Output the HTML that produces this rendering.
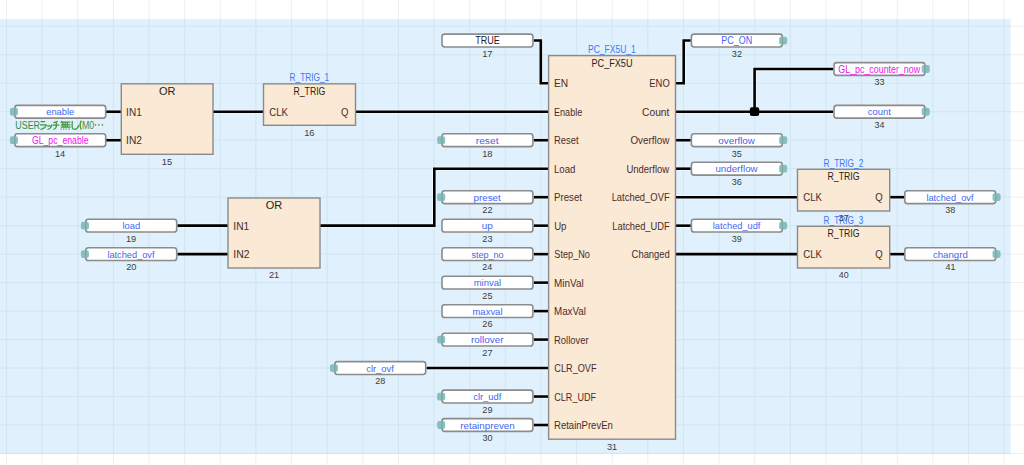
<!DOCTYPE html>
<html><head><meta charset="utf-8"><style>html,body{margin:0;padding:0;background:#fff;overflow:hidden}svg{display:block}text{font-family:"Liberation Sans",sans-serif}</style></head>
<body><svg width="1024" height="465" viewBox="0 0 1024 465" font-family="'Liberation Sans', sans-serif">
<rect x="0" y="0" width="1024" height="465" fill="#fff"/><rect x="5.95" y="0" width="1.1" height="465" fill="#f0f0f0"/><rect x="41.58" y="0" width="1.1" height="465" fill="#f0f0f0"/><rect x="77.21" y="0" width="1.1" height="465" fill="#f0f0f0"/><rect x="112.84" y="0" width="1.1" height="465" fill="#f0f0f0"/><rect x="148.47" y="0" width="1.1" height="465" fill="#f0f0f0"/><rect x="184.10" y="0" width="1.1" height="465" fill="#f0f0f0"/><rect x="219.73" y="0" width="1.1" height="465" fill="#f0f0f0"/><rect x="255.36" y="0" width="1.1" height="465" fill="#f0f0f0"/><rect x="290.99" y="0" width="1.1" height="465" fill="#f0f0f0"/><rect x="326.62" y="0" width="1.1" height="465" fill="#f0f0f0"/><rect x="362.25" y="0" width="1.1" height="465" fill="#f0f0f0"/><rect x="397.88" y="0" width="1.1" height="465" fill="#f0f0f0"/><rect x="433.51" y="0" width="1.1" height="465" fill="#f0f0f0"/><rect x="469.14" y="0" width="1.1" height="465" fill="#f0f0f0"/><rect x="504.77" y="0" width="1.1" height="465" fill="#f0f0f0"/><rect x="540.40" y="0" width="1.1" height="465" fill="#f0f0f0"/><rect x="576.03" y="0" width="1.1" height="465" fill="#f0f0f0"/><rect x="611.66" y="0" width="1.1" height="465" fill="#f0f0f0"/><rect x="647.29" y="0" width="1.1" height="465" fill="#f0f0f0"/><rect x="682.92" y="0" width="1.1" height="465" fill="#f0f0f0"/><rect x="718.55" y="0" width="1.1" height="465" fill="#f0f0f0"/><rect x="754.18" y="0" width="1.1" height="465" fill="#f0f0f0"/><rect x="789.81" y="0" width="1.1" height="465" fill="#f0f0f0"/><rect x="825.44" y="0" width="1.1" height="465" fill="#f0f0f0"/><rect x="861.07" y="0" width="1.1" height="465" fill="#f0f0f0"/><rect x="896.70" y="0" width="1.1" height="465" fill="#f0f0f0"/><rect x="932.33" y="0" width="1.1" height="465" fill="#f0f0f0"/><rect x="967.96" y="0" width="1.1" height="465" fill="#f0f0f0"/><rect x="1003.59" y="0" width="1.1" height="465" fill="#f0f0f0"/><rect x="0" y="25.75" width="1024" height="1.1" fill="#f0f0f0"/><rect x="0" y="54.23" width="1024" height="1.1" fill="#f0f0f0"/><rect x="0" y="82.71" width="1024" height="1.1" fill="#f0f0f0"/><rect x="0" y="111.19" width="1024" height="1.1" fill="#f0f0f0"/><rect x="0" y="139.67" width="1024" height="1.1" fill="#f0f0f0"/><rect x="0" y="168.15" width="1024" height="1.1" fill="#f0f0f0"/><rect x="0" y="196.63" width="1024" height="1.1" fill="#f0f0f0"/><rect x="0" y="225.11" width="1024" height="1.1" fill="#f0f0f0"/><rect x="0" y="253.59" width="1024" height="1.1" fill="#f0f0f0"/><rect x="0" y="282.07" width="1024" height="1.1" fill="#f0f0f0"/><rect x="0" y="310.55" width="1024" height="1.1" fill="#f0f0f0"/><rect x="0" y="339.03" width="1024" height="1.1" fill="#f0f0f0"/><rect x="0" y="367.51" width="1024" height="1.1" fill="#f0f0f0"/><rect x="0" y="395.99" width="1024" height="1.1" fill="#f0f0f0"/><rect x="0" y="424.47" width="1024" height="1.1" fill="#f0f0f0"/><rect x="0" y="452.95" width="1024" height="1.1" fill="#f0f0f0"/><rect x="0" y="19.1" width="1010.6" height="434.40" fill="#e0f1fd"/><rect x="5.95" y="19.1" width="1.1" height="434.40" fill="#d1e5f2"/><rect x="41.58" y="19.1" width="1.1" height="434.40" fill="#d1e5f2"/><rect x="77.21" y="19.1" width="1.1" height="434.40" fill="#d1e5f2"/><rect x="112.84" y="19.1" width="1.1" height="434.40" fill="#d1e5f2"/><rect x="148.47" y="19.1" width="1.1" height="434.40" fill="#d1e5f2"/><rect x="184.10" y="19.1" width="1.1" height="434.40" fill="#d1e5f2"/><rect x="219.73" y="19.1" width="1.1" height="434.40" fill="#d1e5f2"/><rect x="255.36" y="19.1" width="1.1" height="434.40" fill="#d1e5f2"/><rect x="290.99" y="19.1" width="1.1" height="434.40" fill="#d1e5f2"/><rect x="326.62" y="19.1" width="1.1" height="434.40" fill="#d1e5f2"/><rect x="362.25" y="19.1" width="1.1" height="434.40" fill="#d1e5f2"/><rect x="397.88" y="19.1" width="1.1" height="434.40" fill="#d1e5f2"/><rect x="433.51" y="19.1" width="1.1" height="434.40" fill="#d1e5f2"/><rect x="469.14" y="19.1" width="1.1" height="434.40" fill="#d1e5f2"/><rect x="504.77" y="19.1" width="1.1" height="434.40" fill="#d1e5f2"/><rect x="540.40" y="19.1" width="1.1" height="434.40" fill="#d1e5f2"/><rect x="576.03" y="19.1" width="1.1" height="434.40" fill="#d1e5f2"/><rect x="611.66" y="19.1" width="1.1" height="434.40" fill="#d1e5f2"/><rect x="647.29" y="19.1" width="1.1" height="434.40" fill="#d1e5f2"/><rect x="682.92" y="19.1" width="1.1" height="434.40" fill="#d1e5f2"/><rect x="718.55" y="19.1" width="1.1" height="434.40" fill="#d1e5f2"/><rect x="754.18" y="19.1" width="1.1" height="434.40" fill="#d1e5f2"/><rect x="789.81" y="19.1" width="1.1" height="434.40" fill="#d1e5f2"/><rect x="825.44" y="19.1" width="1.1" height="434.40" fill="#d1e5f2"/><rect x="861.07" y="19.1" width="1.1" height="434.40" fill="#d1e5f2"/><rect x="896.70" y="19.1" width="1.1" height="434.40" fill="#d1e5f2"/><rect x="932.33" y="19.1" width="1.1" height="434.40" fill="#d1e5f2"/><rect x="967.96" y="19.1" width="1.1" height="434.40" fill="#d1e5f2"/><rect x="1003.59" y="19.1" width="1.1" height="434.40" fill="#d1e5f2"/><rect x="0" y="25.75" width="1010.6" height="1.1" fill="#d1e5f2"/><rect x="0" y="54.23" width="1010.6" height="1.1" fill="#d1e5f2"/><rect x="0" y="82.71" width="1010.6" height="1.1" fill="#d1e5f2"/><rect x="0" y="111.19" width="1010.6" height="1.1" fill="#d1e5f2"/><rect x="0" y="139.67" width="1010.6" height="1.1" fill="#d1e5f2"/><rect x="0" y="168.15" width="1010.6" height="1.1" fill="#d1e5f2"/><rect x="0" y="196.63" width="1010.6" height="1.1" fill="#d1e5f2"/><rect x="0" y="225.11" width="1010.6" height="1.1" fill="#d1e5f2"/><rect x="0" y="253.59" width="1010.6" height="1.1" fill="#d1e5f2"/><rect x="0" y="282.07" width="1010.6" height="1.1" fill="#d1e5f2"/><rect x="0" y="310.55" width="1010.6" height="1.1" fill="#d1e5f2"/><rect x="0" y="339.03" width="1010.6" height="1.1" fill="#d1e5f2"/><rect x="0" y="367.51" width="1010.6" height="1.1" fill="#d1e5f2"/><rect x="0" y="395.99" width="1010.6" height="1.1" fill="#d1e5f2"/><rect x="0" y="424.47" width="1010.6" height="1.1" fill="#d1e5f2"/><rect x="0" y="452.95" width="1010.6" height="1.1" fill="#d1e5f2"/>
<path d="M106.00,111.74 L121.30,111.74" fill="none" stroke="#fff" stroke-opacity="0.45" stroke-width="4.4" stroke-linejoin="miter" stroke-linecap="butt"/>
<path d="M106.00,111.74 L121.30,111.74" fill="none" stroke="#000" stroke-width="2.6" stroke-linejoin="miter" stroke-linecap="butt"/>
<path d="M106.00,140.22 L121.30,140.22" fill="none" stroke="#fff" stroke-opacity="0.45" stroke-width="4.4" stroke-linejoin="miter" stroke-linecap="butt"/>
<path d="M106.00,140.22 L121.30,140.22" fill="none" stroke="#000" stroke-width="2.6" stroke-linejoin="miter" stroke-linecap="butt"/>
<path d="M213.00,111.74 L263.50,111.74" fill="none" stroke="#fff" stroke-opacity="0.45" stroke-width="4.4" stroke-linejoin="miter" stroke-linecap="butt"/>
<path d="M213.00,111.74 L263.50,111.74" fill="none" stroke="#000" stroke-width="2.6" stroke-linejoin="miter" stroke-linecap="butt"/>
<path d="M355.50,111.74 L548.70,111.74" fill="none" stroke="#fff" stroke-opacity="0.45" stroke-width="4.4" stroke-linejoin="miter" stroke-linecap="butt"/>
<path d="M355.50,111.74 L548.70,111.74" fill="none" stroke="#000" stroke-width="2.6" stroke-linejoin="miter" stroke-linecap="butt"/>
<path d="M533.75,40.54 L540.80,40.54 L540.80,83.26 L548.70,83.26" fill="none" stroke="#fff" stroke-opacity="0.45" stroke-width="4.4" stroke-linejoin="miter" stroke-linecap="butt"/>
<path d="M533.75,40.54 L540.80,40.54 L540.80,83.26 L548.70,83.26" fill="none" stroke="#000" stroke-width="2.6" stroke-linejoin="miter" stroke-linecap="butt"/>
<path d="M533.75,140.22 L548.60,140.22" fill="none" stroke="#fff" stroke-opacity="0.45" stroke-width="4.4" stroke-linejoin="miter" stroke-linecap="butt"/>
<path d="M533.75,140.22 L548.60,140.22" fill="none" stroke="#000" stroke-width="2.6" stroke-linejoin="miter" stroke-linecap="butt"/>
<path d="M533.75,197.18 L548.60,197.18" fill="none" stroke="#fff" stroke-opacity="0.45" stroke-width="4.4" stroke-linejoin="miter" stroke-linecap="butt"/>
<path d="M533.75,197.18 L548.60,197.18" fill="none" stroke="#000" stroke-width="2.6" stroke-linejoin="miter" stroke-linecap="butt"/>
<path d="M533.75,225.66 L548.60,225.66" fill="none" stroke="#fff" stroke-opacity="0.45" stroke-width="4.4" stroke-linejoin="miter" stroke-linecap="butt"/>
<path d="M533.75,225.66 L548.60,225.66" fill="none" stroke="#000" stroke-width="2.6" stroke-linejoin="miter" stroke-linecap="butt"/>
<path d="M533.75,254.14 L548.60,254.14" fill="none" stroke="#fff" stroke-opacity="0.45" stroke-width="4.4" stroke-linejoin="miter" stroke-linecap="butt"/>
<path d="M533.75,254.14 L548.60,254.14" fill="none" stroke="#000" stroke-width="2.6" stroke-linejoin="miter" stroke-linecap="butt"/>
<path d="M533.75,282.62 L548.60,282.62" fill="none" stroke="#fff" stroke-opacity="0.45" stroke-width="4.4" stroke-linejoin="miter" stroke-linecap="butt"/>
<path d="M533.75,282.62 L548.60,282.62" fill="none" stroke="#000" stroke-width="2.6" stroke-linejoin="miter" stroke-linecap="butt"/>
<path d="M533.75,311.10 L548.60,311.10" fill="none" stroke="#fff" stroke-opacity="0.45" stroke-width="4.4" stroke-linejoin="miter" stroke-linecap="butt"/>
<path d="M533.75,311.10 L548.60,311.10" fill="none" stroke="#000" stroke-width="2.6" stroke-linejoin="miter" stroke-linecap="butt"/>
<path d="M533.75,339.58 L548.60,339.58" fill="none" stroke="#fff" stroke-opacity="0.45" stroke-width="4.4" stroke-linejoin="miter" stroke-linecap="butt"/>
<path d="M533.75,339.58 L548.60,339.58" fill="none" stroke="#000" stroke-width="2.6" stroke-linejoin="miter" stroke-linecap="butt"/>
<path d="M533.75,396.54 L548.60,396.54" fill="none" stroke="#fff" stroke-opacity="0.45" stroke-width="4.4" stroke-linejoin="miter" stroke-linecap="butt"/>
<path d="M533.75,396.54 L548.60,396.54" fill="none" stroke="#000" stroke-width="2.6" stroke-linejoin="miter" stroke-linecap="butt"/>
<path d="M533.75,425.02 L548.60,425.02" fill="none" stroke="#fff" stroke-opacity="0.45" stroke-width="4.4" stroke-linejoin="miter" stroke-linecap="butt"/>
<path d="M533.75,425.02 L548.60,425.02" fill="none" stroke="#000" stroke-width="2.6" stroke-linejoin="miter" stroke-linecap="butt"/>
<path d="M426.50,368.06 L548.60,368.06" fill="none" stroke="#fff" stroke-opacity="0.45" stroke-width="4.4" stroke-linejoin="miter" stroke-linecap="butt"/>
<path d="M426.50,368.06 L548.60,368.06" fill="none" stroke="#000" stroke-width="2.6" stroke-linejoin="miter" stroke-linecap="butt"/>
<path d="M548.60,168.70 L434.30,168.70 L434.30,225.66 L320.00,225.66" fill="none" stroke="#fff" stroke-opacity="0.45" stroke-width="4.4" stroke-linejoin="miter" stroke-linecap="butt"/>
<path d="M548.60,168.70 L434.30,168.70 L434.30,225.66 L320.00,225.66" fill="none" stroke="#000" stroke-width="2.6" stroke-linejoin="miter" stroke-linecap="butt"/>
<path d="M177.50,225.66 L228.00,225.66" fill="none" stroke="#fff" stroke-opacity="0.45" stroke-width="4.4" stroke-linejoin="miter" stroke-linecap="butt"/>
<path d="M177.50,225.66 L228.00,225.66" fill="none" stroke="#000" stroke-width="2.6" stroke-linejoin="miter" stroke-linecap="butt"/>
<path d="M177.50,254.14 L228.00,254.14" fill="none" stroke="#fff" stroke-opacity="0.45" stroke-width="4.4" stroke-linejoin="miter" stroke-linecap="butt"/>
<path d="M177.50,254.14 L228.00,254.14" fill="none" stroke="#000" stroke-width="2.6" stroke-linejoin="miter" stroke-linecap="butt"/>
<path d="M675.50,83.26 L683.70,83.26 L683.70,40.54 L690.75,40.54" fill="none" stroke="#fff" stroke-opacity="0.45" stroke-width="4.4" stroke-linejoin="miter" stroke-linecap="butt"/>
<path d="M675.50,83.26 L683.70,83.26 L683.70,40.54 L690.75,40.54" fill="none" stroke="#000" stroke-width="2.6" stroke-linejoin="miter" stroke-linecap="butt"/>
<path d="M675.50,140.22 L690.75,140.22" fill="none" stroke="#fff" stroke-opacity="0.45" stroke-width="4.4" stroke-linejoin="miter" stroke-linecap="butt"/>
<path d="M675.50,140.22 L690.75,140.22" fill="none" stroke="#000" stroke-width="2.6" stroke-linejoin="miter" stroke-linecap="butt"/>
<path d="M675.50,168.70 L690.75,168.70" fill="none" stroke="#fff" stroke-opacity="0.45" stroke-width="4.4" stroke-linejoin="miter" stroke-linecap="butt"/>
<path d="M675.50,168.70 L690.75,168.70" fill="none" stroke="#000" stroke-width="2.6" stroke-linejoin="miter" stroke-linecap="butt"/>
<path d="M675.50,225.66 L690.75,225.66" fill="none" stroke="#fff" stroke-opacity="0.45" stroke-width="4.4" stroke-linejoin="miter" stroke-linecap="butt"/>
<path d="M675.50,225.66 L690.75,225.66" fill="none" stroke="#000" stroke-width="2.6" stroke-linejoin="miter" stroke-linecap="butt"/>
<path d="M675.50,111.74 L833.00,111.74" fill="none" stroke="#fff" stroke-opacity="0.45" stroke-width="4.4" stroke-linejoin="miter" stroke-linecap="butt"/>
<path d="M675.50,111.74 L833.00,111.74" fill="none" stroke="#000" stroke-width="2.6" stroke-linejoin="miter" stroke-linecap="butt"/>
<path d="M754.60,111.74 L754.60,69.02 L833.00,69.02" fill="none" stroke="#fff" stroke-opacity="0.45" stroke-width="4.4" stroke-linejoin="miter" stroke-linecap="butt"/>
<path d="M754.60,111.74 L754.60,69.02 L833.00,69.02" fill="none" stroke="#000" stroke-width="2.6" stroke-linejoin="miter" stroke-linecap="butt"/>
<path d="M675.50,197.18 L797.50,197.18" fill="none" stroke="#fff" stroke-opacity="0.45" stroke-width="4.4" stroke-linejoin="miter" stroke-linecap="butt"/>
<path d="M675.50,197.18 L797.50,197.18" fill="none" stroke="#000" stroke-width="2.6" stroke-linejoin="miter" stroke-linecap="butt"/>
<path d="M675.50,254.14 L797.50,254.14" fill="none" stroke="#fff" stroke-opacity="0.45" stroke-width="4.4" stroke-linejoin="miter" stroke-linecap="butt"/>
<path d="M675.50,254.14 L797.50,254.14" fill="none" stroke="#000" stroke-width="2.6" stroke-linejoin="miter" stroke-linecap="butt"/>
<path d="M889.70,197.18 L904.00,197.18" fill="none" stroke="#fff" stroke-opacity="0.45" stroke-width="4.4" stroke-linejoin="miter" stroke-linecap="butt"/>
<path d="M889.70,197.18 L904.00,197.18" fill="none" stroke="#000" stroke-width="2.6" stroke-linejoin="miter" stroke-linecap="butt"/>
<path d="M889.70,254.14 L904.00,254.14" fill="none" stroke="#fff" stroke-opacity="0.45" stroke-width="4.4" stroke-linejoin="miter" stroke-linecap="butt"/>
<path d="M889.70,254.14 L904.00,254.14" fill="none" stroke="#000" stroke-width="2.6" stroke-linejoin="miter" stroke-linecap="butt"/>
<rect x="121.30" y="83.80" width="91.70" height="70.50" fill="#f9e9d5" stroke="#8a8a8a" stroke-width="1.4"/>
<rect x="263.50" y="83.85" width="92.00" height="41.45" fill="#f9e9d5" stroke="#8a8a8a" stroke-width="1.4"/>
<rect x="548.60" y="55.60" width="126.90" height="383.60" fill="#f9e9d5" stroke="#8a8a8a" stroke-width="1.4"/>
<rect x="228.00" y="198.00" width="92.00" height="70.00" fill="#f9e9d5" stroke="#8a8a8a" stroke-width="1.4"/>
<rect x="797.50" y="169.30" width="92.20" height="41.70" fill="#f9e9d5" stroke="#8a8a8a" stroke-width="1.4"/>
<rect x="797.50" y="226.30" width="92.20" height="41.70" fill="#f9e9d5" stroke="#8a8a8a" stroke-width="1.4"/>
<rect x="14.80" y="105.34" width="90.90" height="12.80" rx="2.6" ry="2.6" fill="#fff" stroke="#8c8c8c" stroke-width="1.6"/>
<rect x="9.90" y="107.84" width="8.1" height="7.8" rx="2.2" ry="2.2" fill="#72b3ae" fill-opacity="0.8"/>
<rect x="14.80" y="133.82" width="90.90" height="12.80" rx="2.6" ry="2.6" fill="#fff" stroke="#8c8c8c" stroke-width="1.6"/>
<rect x="9.90" y="136.32" width="8.1" height="7.8" rx="2.2" ry="2.2" fill="#72b3ae" fill-opacity="0.8"/>
<rect x="85.80" y="219.26" width="90.90" height="12.80" rx="2.6" ry="2.6" fill="#fff" stroke="#8c8c8c" stroke-width="1.6"/>
<rect x="80.90" y="221.76" width="8.1" height="7.8" rx="2.2" ry="2.2" fill="#72b3ae" fill-opacity="0.8"/>
<rect x="85.80" y="247.74" width="90.90" height="12.80" rx="2.6" ry="2.6" fill="#fff" stroke="#8c8c8c" stroke-width="1.6"/>
<rect x="80.90" y="250.24" width="8.1" height="7.8" rx="2.2" ry="2.2" fill="#72b3ae" fill-opacity="0.8"/>
<rect x="442.00" y="34.14" width="90.90" height="12.80" rx="2.6" ry="2.6" fill="#fff" stroke="#8c8c8c" stroke-width="1.6"/>
<rect x="442.00" y="133.82" width="90.90" height="12.80" rx="2.6" ry="2.6" fill="#fff" stroke="#8c8c8c" stroke-width="1.6"/>
<rect x="437.10" y="136.32" width="8.1" height="7.8" rx="2.2" ry="2.2" fill="#72b3ae" fill-opacity="0.8"/>
<rect x="442.00" y="190.78" width="90.90" height="12.80" rx="2.6" ry="2.6" fill="#fff" stroke="#8c8c8c" stroke-width="1.6"/>
<rect x="437.10" y="193.28" width="8.1" height="7.8" rx="2.2" ry="2.2" fill="#72b3ae" fill-opacity="0.8"/>
<rect x="442.00" y="219.26" width="90.90" height="12.80" rx="2.6" ry="2.6" fill="#fff" stroke="#8c8c8c" stroke-width="1.6"/>
<rect x="442.00" y="247.74" width="90.90" height="12.80" rx="2.6" ry="2.6" fill="#fff" stroke="#8c8c8c" stroke-width="1.6"/>
<rect x="442.00" y="276.22" width="90.90" height="12.80" rx="2.6" ry="2.6" fill="#fff" stroke="#8c8c8c" stroke-width="1.6"/>
<rect x="442.00" y="304.70" width="90.90" height="12.80" rx="2.6" ry="2.6" fill="#fff" stroke="#8c8c8c" stroke-width="1.6"/>
<rect x="442.00" y="333.18" width="90.90" height="12.80" rx="2.6" ry="2.6" fill="#fff" stroke="#8c8c8c" stroke-width="1.6"/>
<rect x="437.10" y="335.68" width="8.1" height="7.8" rx="2.2" ry="2.2" fill="#72b3ae" fill-opacity="0.8"/>
<rect x="442.00" y="390.14" width="90.90" height="12.80" rx="2.6" ry="2.6" fill="#fff" stroke="#8c8c8c" stroke-width="1.6"/>
<rect x="437.10" y="392.64" width="8.1" height="7.8" rx="2.2" ry="2.2" fill="#72b3ae" fill-opacity="0.8"/>
<rect x="442.00" y="418.62" width="90.90" height="12.80" rx="2.6" ry="2.6" fill="#fff" stroke="#8c8c8c" stroke-width="1.6"/>
<rect x="437.10" y="421.12" width="8.1" height="7.8" rx="2.2" ry="2.2" fill="#72b3ae" fill-opacity="0.8"/>
<rect x="334.80" y="361.66" width="90.90" height="12.80" rx="2.6" ry="2.6" fill="#fff" stroke="#8c8c8c" stroke-width="1.6"/>
<rect x="329.90" y="364.16" width="8.1" height="7.8" rx="2.2" ry="2.2" fill="#72b3ae" fill-opacity="0.8"/>
<rect x="691.40" y="34.14" width="90.90" height="12.80" rx="2.6" ry="2.6" fill="#fff" stroke="#8c8c8c" stroke-width="1.6"/>
<rect x="779.10" y="36.64" width="8.1" height="7.8" rx="2.2" ry="2.2" fill="#72b3ae" fill-opacity="0.8"/>
<rect x="691.40" y="133.82" width="90.90" height="12.80" rx="2.6" ry="2.6" fill="#fff" stroke="#8c8c8c" stroke-width="1.6"/>
<rect x="779.10" y="136.32" width="8.1" height="7.8" rx="2.2" ry="2.2" fill="#72b3ae" fill-opacity="0.8"/>
<rect x="691.40" y="162.30" width="90.90" height="12.80" rx="2.6" ry="2.6" fill="#fff" stroke="#8c8c8c" stroke-width="1.6"/>
<rect x="779.10" y="164.80" width="8.1" height="7.8" rx="2.2" ry="2.2" fill="#72b3ae" fill-opacity="0.8"/>
<rect x="691.40" y="219.26" width="90.90" height="12.80" rx="2.6" ry="2.6" fill="#fff" stroke="#8c8c8c" stroke-width="1.6"/>
<rect x="779.10" y="221.76" width="8.1" height="7.8" rx="2.2" ry="2.2" fill="#72b3ae" fill-opacity="0.8"/>
<rect x="834.00" y="62.62" width="90.90" height="12.80" rx="2.6" ry="2.6" fill="#fff" stroke="#8c8c8c" stroke-width="1.6"/>
<rect x="921.70" y="65.12" width="8.1" height="7.8" rx="2.2" ry="2.2" fill="#72b3ae" fill-opacity="0.8"/>
<rect x="834.00" y="105.34" width="90.90" height="12.80" rx="2.6" ry="2.6" fill="#fff" stroke="#8c8c8c" stroke-width="1.6"/>
<rect x="921.70" y="107.84" width="8.1" height="7.8" rx="2.2" ry="2.2" fill="#72b3ae" fill-opacity="0.8"/>
<rect x="904.80" y="190.78" width="90.90" height="12.80" rx="2.6" ry="2.6" fill="#fff" stroke="#8c8c8c" stroke-width="1.6"/>
<rect x="992.50" y="193.28" width="8.1" height="7.8" rx="2.2" ry="2.2" fill="#72b3ae" fill-opacity="0.8"/>
<rect x="904.80" y="247.74" width="90.90" height="12.80" rx="2.6" ry="2.6" fill="#fff" stroke="#8c8c8c" stroke-width="1.6"/>
<rect x="992.50" y="250.24" width="8.1" height="7.8" rx="2.2" ry="2.2" fill="#72b3ae" fill-opacity="0.8"/>
<rect x="749.90" y="107.35" width="9.3" height="8.7" rx="2" ry="2" fill="#000"/>
<g fill="none" stroke="#3c9838" stroke-width="1.25" stroke-linecap="butt" stroke-linejoin="round">
<path d="M40.6,121.7 H45.2 M40.0,124.9 H46.3 Q45.6,128.3 40.3,129.5"/>
<path d="M47.8,125.0 L48.3,126.8 M49.6,124.8 L50.1,126.6 M51.8,124.5 Q51.5,128.5 47.4,129.5"/>
<path d="M53.3,122.6 Q56,122.3 57.8,121.3 M52.6,125.1 H59.3 M56.3,122.4 V126.5 Q56.0,129.0 53.3,129.5"/>
<path d="M61.9,121.0 L60.9,123.0 M61.6,122.2 H70.2 M60.8,124.9 H70.6 M60.8,127.1 H70.6 M63.0,122.2 V127.1 M65.2,122.2 V127.1 M67.4,122.2 V127.1 M61.4,128.5 L60.9,129.6 M63.6,128.5 L63.8,129.6 M66.1,128.5 L66.3,129.6 M68.7,128.5 L69.5,129.6"/>
<path d="M72.2,121.0 V127.5 Q72.4,129.3 75.1,129.3 Q77.6,129.0 78.9,125.0"/>
<path d="M81.3,120.6 Q78.9,125.1 81.3,129.6"/>
</g><rect x="94.80" y="124.2" width="1.4" height="1.4" fill="#4a8a30"/><rect x="98.20" y="124.2" width="1.4" height="1.4" fill="#4a8a30"/><rect x="101.70" y="124.2" width="1.4" height="1.4" fill="#4a8a30"/>
<text x="158.96" y="94.80" font-size="10.4" fill="#262222" textLength="16.49" lengthAdjust="spacingAndGlyphs">OR</text>
<text x="161.85" y="164.60" font-size="9.5" fill="#3c3c3c" textLength="10.34" lengthAdjust="spacingAndGlyphs">15</text>
<text x="126.10" y="115.74" font-size="10.4" fill="#4a2c2c" textLength="15.62" lengthAdjust="spacingAndGlyphs">IN1</text>
<text x="126.08" y="144.22" font-size="10.4" fill="#4a2c2c" textLength="15.89" lengthAdjust="spacingAndGlyphs">IN2</text>
<text x="293.50" y="94.85" font-size="10.4" fill="#262222" textLength="31.88" lengthAdjust="spacingAndGlyphs">R_TRIG</text>
<text x="289.54" y="81.15" font-size="10.4" fill="#4076f4" textLength="39.67" lengthAdjust="spacingAndGlyphs">R_TRIG_1</text>
<text x="304.20" y="135.60" font-size="9.5" fill="#3c3c3c" textLength="10.34" lengthAdjust="spacingAndGlyphs">16</text>
<text x="269.32" y="115.74" font-size="10.4" fill="#4a2c2c" textLength="18.73" lengthAdjust="spacingAndGlyphs">CLK</text>
<text x="341.12" y="115.74" font-size="10.4" fill="#4a2c2c" textLength="7.44" lengthAdjust="spacingAndGlyphs">Q</text>
<text x="591.57" y="66.60" font-size="10.4" fill="#262222" textLength="40.88" lengthAdjust="spacingAndGlyphs">PC_FX5U</text>
<text x="587.99" y="52.90" font-size="10.4" fill="#4076f4" textLength="47.80" lengthAdjust="spacingAndGlyphs">PC_FX5U_1</text>
<text x="607.04" y="449.50" font-size="9.5" fill="#3c3c3c" textLength="10.14" lengthAdjust="spacingAndGlyphs">31</text>
<text x="553.99" y="87.26" font-size="10.4" fill="#4a2c2c" textLength="14.12" lengthAdjust="spacingAndGlyphs">EN</text>
<text x="554.08" y="115.74" font-size="10.4" fill="#4a2c2c" textLength="28.12" lengthAdjust="spacingAndGlyphs">Enable</text>
<text x="554.05" y="144.22" font-size="10.4" fill="#4a2c2c" textLength="24.52" lengthAdjust="spacingAndGlyphs">Reset</text>
<text x="554.03" y="172.70" font-size="10.4" fill="#4a2c2c" textLength="21.39" lengthAdjust="spacingAndGlyphs">Load</text>
<text x="554.02" y="201.18" font-size="10.4" fill="#4a2c2c" textLength="28.03" lengthAdjust="spacingAndGlyphs">Preset</text>
<text x="554.13" y="229.66" font-size="10.4" fill="#4a2c2c" textLength="12.29" lengthAdjust="spacingAndGlyphs">Up</text>
<text x="554.34" y="258.14" font-size="10.4" fill="#4a2c2c" textLength="35.59" lengthAdjust="spacingAndGlyphs">Step_No</text>
<text x="554.00" y="286.62" font-size="10.4" fill="#4a2c2c" textLength="29.67" lengthAdjust="spacingAndGlyphs">MinVal</text>
<text x="554.02" y="315.10" font-size="10.4" fill="#4a2c2c" textLength="31.87" lengthAdjust="spacingAndGlyphs">MaxVal</text>
<text x="554.04" y="343.58" font-size="10.4" fill="#4a2c2c" textLength="34.68" lengthAdjust="spacingAndGlyphs">Rollover</text>
<text x="554.34" y="372.06" font-size="10.4" fill="#4a2c2c" textLength="42.25" lengthAdjust="spacingAndGlyphs">CLR_OVF</text>
<text x="554.35" y="400.54" font-size="10.4" fill="#4a2c2c" textLength="41.58" lengthAdjust="spacingAndGlyphs">CLR_UDF</text>
<text x="554.04" y="429.02" font-size="10.4" fill="#4a2c2c" textLength="58.83" lengthAdjust="spacingAndGlyphs">RetainPrevEn</text>
<text x="649.30" y="87.26" font-size="10.4" fill="#4a2c2c" textLength="20.45" lengthAdjust="spacingAndGlyphs">ENO</text>
<text x="642.04" y="115.74" font-size="10.4" fill="#4a2c2c" textLength="27.35" lengthAdjust="spacingAndGlyphs">Count</text>
<text x="630.41" y="144.22" font-size="10.4" fill="#4a2c2c" textLength="38.85" lengthAdjust="spacingAndGlyphs">Overflow</text>
<text x="626.38" y="172.70" font-size="10.4" fill="#4a2c2c" textLength="42.84" lengthAdjust="spacingAndGlyphs">Underflow</text>
<text x="611.65" y="201.18" font-size="10.4" fill="#4a2c2c" textLength="58.03" lengthAdjust="spacingAndGlyphs">Latched_OVF</text>
<text x="612.31" y="229.66" font-size="10.4" fill="#4a2c2c" textLength="57.36" lengthAdjust="spacingAndGlyphs">Latched_UDF</text>
<text x="631.58" y="258.14" font-size="10.4" fill="#4a2c2c" textLength="38.28" lengthAdjust="spacingAndGlyphs">Changed</text>
<text x="265.81" y="209.00" font-size="10.4" fill="#262222" textLength="16.49" lengthAdjust="spacingAndGlyphs">OR</text>
<text x="268.89" y="278.30" font-size="9.5" fill="#3c3c3c" textLength="10.24" lengthAdjust="spacingAndGlyphs">21</text>
<text x="233.33" y="229.66" font-size="10.4" fill="#4a2c2c" textLength="15.89" lengthAdjust="spacingAndGlyphs">IN1</text>
<text x="233.32" y="258.14" font-size="10.4" fill="#4a2c2c" textLength="16.16" lengthAdjust="spacingAndGlyphs">IN2</text>
<text x="827.60" y="180.30" font-size="10.4" fill="#262222" textLength="31.88" lengthAdjust="spacingAndGlyphs">R_TRIG</text>
<text x="823.56" y="166.60" font-size="10.4" fill="#4076f4" textLength="39.83" lengthAdjust="spacingAndGlyphs">R_TRIG_2</text>
<text x="803.32" y="201.18" font-size="10.4" fill="#4a2c2c" textLength="18.73" lengthAdjust="spacingAndGlyphs">CLK</text>
<text x="875.32" y="201.18" font-size="10.4" fill="#4a2c2c" textLength="7.44" lengthAdjust="spacingAndGlyphs">Q</text>
<text x="827.60" y="237.30" font-size="10.4" fill="#262222" textLength="31.88" lengthAdjust="spacingAndGlyphs">R_TRIG</text>
<text x="823.56" y="223.60" font-size="10.4" fill="#4076f4" textLength="39.74" lengthAdjust="spacingAndGlyphs">R_TRIG_3</text>
<text x="838.77" y="278.30" font-size="9.5" fill="#3c3c3c" textLength="9.85" lengthAdjust="spacingAndGlyphs">40</text>
<text x="838.59" y="221.00" font-size="9.5" fill="#3c3c3c" textLength="10.14" lengthAdjust="spacingAndGlyphs">37</text>
<text x="803.32" y="258.14" font-size="10.4" fill="#4a2c2c" textLength="18.73" lengthAdjust="spacingAndGlyphs">CLK</text>
<text x="875.32" y="258.14" font-size="10.4" fill="#4a2c2c" textLength="7.44" lengthAdjust="spacingAndGlyphs">Q</text>
<text x="46.20" y="115.44" font-size="9.6" fill="#3f66f0" textLength="28.13" lengthAdjust="spacingAndGlyphs">enable</text>
<text x="31.91" y="143.92" font-size="10.4" fill="#f010f0" textLength="56.63" lengthAdjust="spacingAndGlyphs">GL_pc_enable</text>
<text x="54.96" y="156.52" font-size="9.5" fill="#3c3c3c" textLength="10.24" lengthAdjust="spacingAndGlyphs">14</text>
<text x="122.39" y="229.36" font-size="9.6" fill="#3f66f0" textLength="17.73" lengthAdjust="spacingAndGlyphs">load</text>
<text x="125.95" y="241.96" font-size="9.5" fill="#3c3c3c" textLength="10.34" lengthAdjust="spacingAndGlyphs">19</text>
<text x="107.40" y="257.84" font-size="9.6" fill="#3f66f0" textLength="47.10" lengthAdjust="spacingAndGlyphs">latched_ovf</text>
<text x="126.14" y="270.44" font-size="9.5" fill="#3c3c3c" textLength="10.14" lengthAdjust="spacingAndGlyphs">20</text>
<text x="475.22" y="44.24" font-size="10.4" fill="#1c1c24" textLength="24.66" lengthAdjust="spacingAndGlyphs">TRUE</text>
<text x="482.14" y="56.84" font-size="9.5" fill="#3c3c3c" textLength="10.45" lengthAdjust="spacingAndGlyphs">17</text>
<text x="475.79" y="143.92" font-size="9.6" fill="#3f66f0" textLength="22.75" lengthAdjust="spacingAndGlyphs">reset</text>
<text x="482.15" y="156.52" font-size="9.5" fill="#3c3c3c" textLength="10.34" lengthAdjust="spacingAndGlyphs">18</text>
<text x="473.43" y="200.88" font-size="9.6" fill="#3f66f0" textLength="27.44" lengthAdjust="spacingAndGlyphs">preset</text>
<text x="482.34" y="213.48" font-size="9.5" fill="#3c3c3c" textLength="10.24" lengthAdjust="spacingAndGlyphs">22</text>
<text x="481.80" y="229.36" font-size="9.6" fill="#3f66f0" textLength="11.12" lengthAdjust="spacingAndGlyphs">up</text>
<text x="482.34" y="241.96" font-size="9.5" fill="#3c3c3c" textLength="10.14" lengthAdjust="spacingAndGlyphs">23</text>
<text x="471.38" y="257.84" font-size="9.6" fill="#3f66f0" textLength="32.22" lengthAdjust="spacingAndGlyphs">step_no</text>
<text x="482.35" y="270.44" font-size="9.5" fill="#3c3c3c" textLength="10.04" lengthAdjust="spacingAndGlyphs">24</text>
<text x="473.70" y="286.32" font-size="9.6" fill="#3f66f0" textLength="27.49" lengthAdjust="spacingAndGlyphs">minval</text>
<text x="482.34" y="298.92" font-size="9.5" fill="#3c3c3c" textLength="10.14" lengthAdjust="spacingAndGlyphs">25</text>
<text x="472.46" y="314.80" font-size="9.6" fill="#3f66f0" textLength="30.06" lengthAdjust="spacingAndGlyphs">maxval</text>
<text x="482.34" y="327.40" font-size="9.5" fill="#3c3c3c" textLength="10.14" lengthAdjust="spacingAndGlyphs">26</text>
<text x="471.06" y="343.28" font-size="9.6" fill="#3f66f0" textLength="32.38" lengthAdjust="spacingAndGlyphs">rollover</text>
<text x="482.34" y="355.88" font-size="9.5" fill="#3c3c3c" textLength="10.24" lengthAdjust="spacingAndGlyphs">27</text>
<text x="473.28" y="400.24" font-size="9.6" fill="#3f66f0" textLength="27.99" lengthAdjust="spacingAndGlyphs">clr_udf</text>
<text x="482.34" y="412.84" font-size="9.5" fill="#3c3c3c" textLength="10.14" lengthAdjust="spacingAndGlyphs">29</text>
<text x="460.19" y="428.72" font-size="9.6" fill="#3f66f0" textLength="54.52" lengthAdjust="spacingAndGlyphs">retainpreven</text>
<text x="482.44" y="441.32" font-size="9.5" fill="#3c3c3c" textLength="10.04" lengthAdjust="spacingAndGlyphs">30</text>
<text x="366.20" y="371.76" font-size="9.6" fill="#3f66f0" textLength="27.68" lengthAdjust="spacingAndGlyphs">clr_ovf</text>
<text x="375.14" y="384.36" font-size="9.5" fill="#3c3c3c" textLength="10.14" lengthAdjust="spacingAndGlyphs">28</text>
<text x="721.33" y="44.24" font-size="10.4" fill="#3f66f0" textLength="31.00" lengthAdjust="spacingAndGlyphs">PC_ON</text>
<text x="731.84" y="56.84" font-size="9.5" fill="#3c3c3c" textLength="10.14" lengthAdjust="spacingAndGlyphs">32</text>
<text x="718.28" y="143.92" font-size="9.6" fill="#3f66f0" textLength="36.68" lengthAdjust="spacingAndGlyphs">overflow</text>
<text x="731.84" y="156.52" font-size="9.5" fill="#3c3c3c" textLength="10.04" lengthAdjust="spacingAndGlyphs">35</text>
<text x="715.47" y="172.40" font-size="9.6" fill="#3f66f0" textLength="42.14" lengthAdjust="spacingAndGlyphs">underflow</text>
<text x="731.84" y="185.00" font-size="9.5" fill="#3c3c3c" textLength="10.04" lengthAdjust="spacingAndGlyphs">36</text>
<text x="712.75" y="229.36" font-size="9.6" fill="#3f66f0" textLength="47.66" lengthAdjust="spacingAndGlyphs">latched_udf</text>
<text x="731.84" y="241.96" font-size="9.5" fill="#3c3c3c" textLength="10.04" lengthAdjust="spacingAndGlyphs">39</text>
<text x="838.33" y="72.72" font-size="10.4" fill="#f010f0" textLength="81.78" lengthAdjust="spacingAndGlyphs">GL_pc_counter_now</text>
<text x="874.44" y="85.32" font-size="9.5" fill="#3c3c3c" textLength="10.04" lengthAdjust="spacingAndGlyphs">33</text>
<text x="867.77" y="115.44" font-size="9.6" fill="#3f66f0" textLength="23.04" lengthAdjust="spacingAndGlyphs">count</text>
<text x="874.44" y="128.04" font-size="9.5" fill="#3c3c3c" textLength="9.95" lengthAdjust="spacingAndGlyphs">34</text>
<text x="926.40" y="200.88" font-size="9.6" fill="#3f66f0" textLength="47.10" lengthAdjust="spacingAndGlyphs">latched_ovf</text>
<text x="945.24" y="213.48" font-size="9.5" fill="#3c3c3c" textLength="10.04" lengthAdjust="spacingAndGlyphs">38</text>
<text x="932.94" y="257.84" font-size="9.6" fill="#3f66f0" textLength="34.85" lengthAdjust="spacingAndGlyphs">changrd</text>
<text x="945.42" y="270.44" font-size="9.5" fill="#3c3c3c" textLength="9.95" lengthAdjust="spacingAndGlyphs">41</text>
<text x="15.28" y="129.20" font-size="10.2" fill="#2a9040" textLength="24.75" lengthAdjust="spacingAndGlyphs">USER</text>
<text x="81.89" y="129.20" font-size="10.0" fill="#5a8a30" textLength="12.36" lengthAdjust="spacingAndGlyphs">M0</text>
</svg></body></html>
